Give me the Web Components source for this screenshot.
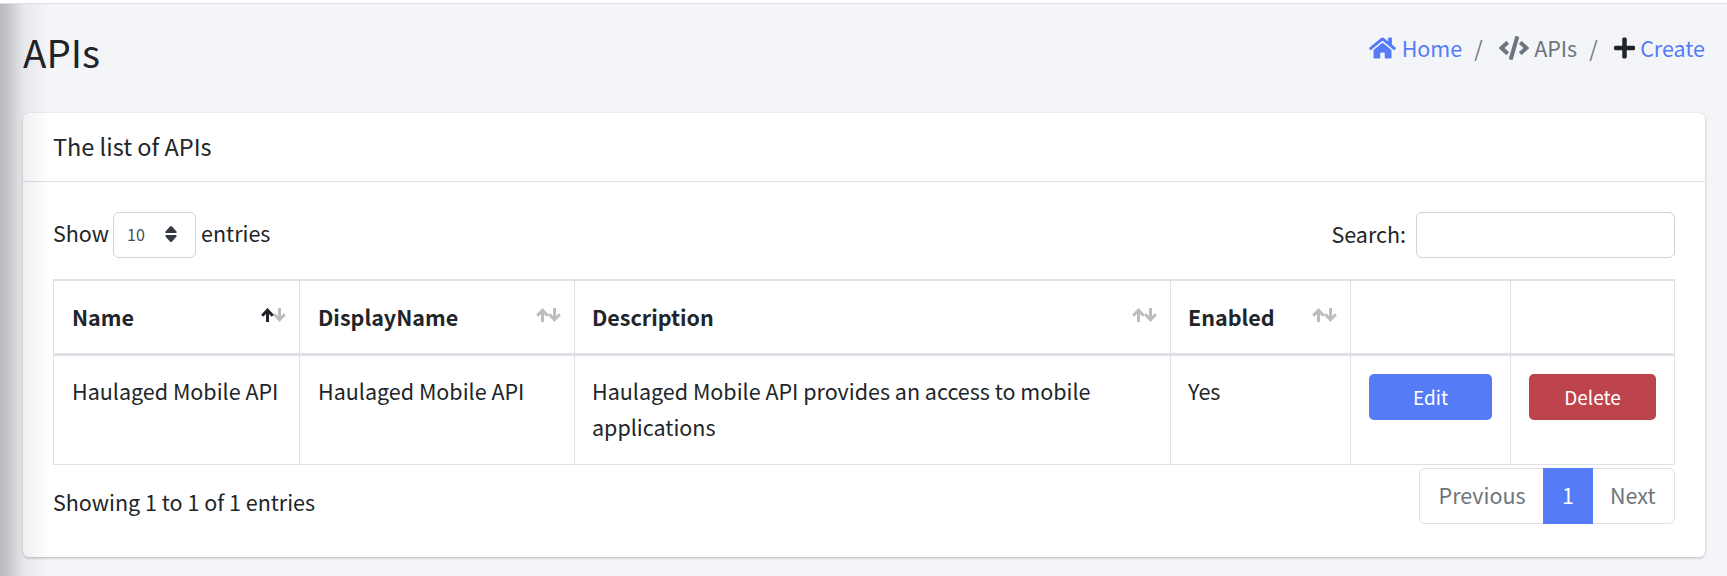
<!DOCTYPE html>
<html><head><meta charset="utf-8">
<style>
html,body{margin:0;padding:0;height:576px;overflow:hidden}
body{background:#f4f5f9;font-family:"Noto Sans CJK JP","Source Sans Pro",sans-serif;color:#212529;font-size:21.5px;line-height:36px}
</style></head><body>
<template id="t-page"><style>
:host{display:block;height:576px;position:relative;box-sizing:border-box;border-top:3px solid #fff}
.line{height:1px;background:#dee2e6}
.shade{position:absolute;left:0;top:1px;bottom:0;width:50px;background:linear-gradient(90deg,rgba(0,0,0,.24),rgba(0,0,0,.2) 14%,rgba(0,0,0,.06) 46%,rgba(0,0,0,0));pointer-events:none}
.main{padding:0 22px 0 23px}
</style><div class="line"></div><div class="main"><slot></slot></div><div class="shade"></div></template>

<template id="t-head"><style>
:host{display:flex;justify-content:space-between;align-items:center;height:109px;box-sizing:border-box;padding-bottom:16px}
h1{margin:0;font-size:38.5px;font-weight:400;line-height:48px}
.crumbs{display:flex;align-items:center;margin-bottom:5.5px}
</style><h1><slot name="title"></slot></h1><div class="crumbs"><slot></slot></div></template>

<template id="t-crumb"><style>
:host{display:inline-flex;align-items:center;gap:5.5px;color:#6c757d;white-space:nowrap}
:host([link]) .t{color:#557cf6}
:host([sep])::before{content:"/";color:#6c757d;margin:0 10.5px 0 12px}
</style><slot name="icon"></slot><span class="t"><slot></slot></span></template>

<template id="t-card"><style>
:host{display:block;background:#fff;border-radius:6px;box-shadow:0 1px 3px rgba(0,0,0,.25);height:444px;position:relative}
header{height:69px;box-sizing:border-box;border-bottom:1px solid #dee2e6;padding:14px 30px;line-height:38px;font-size:23.5px}
.body{padding:30px 30px 0 30px}
</style><header><slot name="title"></slot></header><div class="body"><slot></slot></div></template>

<template id="t-toolbar"><style>
:host{display:flex;justify-content:space-between;align-items:flex-start;height:67px}
.l,.r{display:flex;align-items:center;height:46px}
.l{gap:4px}.r{gap:10px}
.sel{width:83px;height:46px;box-sizing:border-box;border:1px solid #ced4da;border-radius:6px;display:flex;align-items:center;justify-content:space-between;padding:0 18px 2px 13px;font-size:16px;color:#495057}
.box{width:259px;height:46px;box-sizing:border-box;border:1px solid #ced4da;border-radius:6px}
svg{display:block;width:12px;height:16px;fill:#343a40}
.l>span{position:relative;top:-2px}
.l>span:last-child{margin-left:1px}
.r>span{position:relative;top:-1px}
</style><div class="l"><span>Show</span><div class="sel"><span>10</span><svg viewBox="0 0 12 16"><path d="M6 0q.6 0 1 .5l4.500 5q.7 1-.6 1.500H1.100q-1.300-.5-.6-1.500l4.500-5Q5.400 0 6 0zM6 16q-.6 0-1-.5l-4.500-5q-.7-1 .6-1.500h9.800q1.300.5.6 1.500l-4.500 5q-.4.500-1 .5z"/></svg></div><span>entries</span></div><div class="r"><span>Search:</span><div class="box"></div></div></template>

<template id="t-table"><style>
:host{display:block}
table{border-collapse:collapse;table-layout:fixed;width:1621px}
th,td{border:1px solid #dee2e6;padding:0 18px;text-align:left;vertical-align:top}
tr:first-child th{border-top-width:2px}
th{height:72px;font-weight:700;border-bottom:3px solid #dee2e6;vertical-align:middle;position:relative;padding-bottom:0;box-sizing:content-box}
th:nth-child(3),td:nth-child(3),th:nth-child(4),td:nth-child(4){padding-left:17px}
td{height:110px;padding-top:17px;padding-bottom:0;box-sizing:border-box}
.a{position:absolute;right:13px;top:27px;width:25px;height:14px;display:flex}
.a svg{flex:none;width:13px;height:14px;stroke:#bdbdbd;stroke-width:3;fill:none}
.a svg+svg{margin-left:-1px}
.a svg.on{stroke:#212529;position:relative;z-index:1}
.btn{display:flex;align-items:center;justify-content:center;height:46px;color:#fff;border-radius:5px;font-size:19px;line-height:24px;margin-top:1px}
.e{background:#557cf6;width:123px}.d{background:#bd444c;width:127px}
td.b{padding-left:18px;padding-right:0}
</style><table><colgroup><col style="width:246px"><col style="width:275px"><col style="width:596px"><col style="width:180px"><col style="width:160px"><col style="width:164px"></colgroup>
<thead><tr><th>Name<span class="a"><svg viewBox="0 0 13 14" class="on"><path d="M6.500 14V2.500M1.200 7.800 6.500 2.200l5.300 5.600"/></svg><svg viewBox="0 0 13 14"><path d="M6.500 0v11.500M1.200 6.200 6.500 11.800l5.300-5.600"/></svg></span></th>
<th>DisplayName<span class="a"><svg viewBox="0 0 13 14"><path d="M6.500 14V2.500M1.200 7.800 6.500 2.200l5.300 5.600"/></svg><svg viewBox="0 0 13 14"><path d="M6.500 0v11.500M1.200 6.200 6.500 11.800l5.300-5.600"/></svg></span></th>
<th>Description<span class="a"><svg viewBox="0 0 13 14"><path d="M6.500 14V2.500M1.200 7.800 6.500 2.200l5.300 5.600"/></svg><svg viewBox="0 0 13 14"><path d="M6.500 0v11.500M1.200 6.200 6.500 11.800l5.300-5.600"/></svg></span></th>
<th>Enabled<span class="a"><svg viewBox="0 0 13 14"><path d="M6.500 14V2.500M1.200 7.800 6.500 2.200l5.300 5.600"/></svg><svg viewBox="0 0 13 14"><path d="M6.500 0v11.500M1.200 6.200 6.500 11.800l5.300-5.600"/></svg></span></th><th></th><th></th></tr></thead>
<tbody><tr><td>Haulaged Mobile API</td><td>Haulaged Mobile API</td><td>Haulaged Mobile API provides an access to mobile applications</td><td>Yes</td><td class="b"><div class="btn e">Edit</div></td><td class="b"><div class="btn d">Delete</div></td></tr></tbody></table></template>

<template id="t-foot"><style>
:host{display:flex;justify-content:space-between;align-items:flex-start;padding-top:3px}
.i{padding-top:16px}
.p{display:flex;height:56px;box-sizing:border-box;border:1px solid #dee2e6;border-radius:6px;color:#6c757d;line-height:52px;background:#fff}
.p span{padding:0 17px 0 19px}
.p .on{background:#557cf6;color:#fff;margin:-1px 0;line-height:54px;padding:0 19.500px}
.p span:last-child{padding:0 18.500px 0 16.500px}
</style><div class="i">Showing 1 to 1 of 1 entries</div><div class="p"><span>Previous</span><span class="on">1</span><span>Next</span></div></template>

<api-page>
<page-head>
<span slot="title">APIs</span>
<bread-crumb link><svg slot="icon" viewBox="0 0 576 512" style="height:24px;width:27px;display:block;fill:#557cf6"><path d="M280.37 148.26L96 300.11V464a16 16 0 0 0 16 16l112.06-.29a16 16 0 0 0 15.92-16V368a16 16 0 0 1 16-16h64a16 16 0 0 1 16 16v95.64a16 16 0 0 0 16 16.05L464 480a16 16 0 0 0 16-16V300L295.67 148.26a12.19 12.19 0 0 0-15.3 0zM571.6 251.47L488 182.56V44.05a12 12 0 0 0-12-12h-56a12 12 0 0 0-12 12v72.61L318.47 43a48 48 0 0 0-61 0L4.34 251.47a12 12 0 0 0-1.6 16.9l25.5 31A12 12 0 0 0 45.15 301l235.22-193.74a12.19 12.19 0 0 1 15.3 0L530.9 301a12 12 0 0 0 16.9-1.6l25.5-31a12 12 0 0 0-1.7-16.93z"/></svg>Home</bread-crumb>
<bread-crumb sep><svg slot="icon" viewBox="0 0 640 512" style="height:24px;width:30px;display:block;fill:#6c757d"><path d="M278.9 511.5l-61-17.7c-6.4-1.8-10-8.5-8.2-14.9L346.2 8.7c1.8-6.4 8.5-10.1 14.9-8.2l61 17.7c6.4 1.8 10 8.5 8.2 14.9L293.8 503.3c-1.9 6.4-8.5 10.1-14.9 8.2zm-114-112.2l43.5-46.4c4.6-4.9 4.3-12.7-.8-17.2L117 256l90.6-79.7c5.1-4.5 5.5-12.3.8-17.2l-43.5-46.4c-4.5-4.8-12.1-5.1-17-.5L3.8 247.2c-5.1 4.7-5.1 12.8 0 17.5l144.1 135.1c4.9 4.6 12.5 4.4 17-.5zm327.2.6l144.1-135.1c5.1-4.7 5.1-12.8 0-17.5L492.1 112.1c-4.8-4.5-12.4-4.3-17 .5L431.6 159c-4.6 4.9-4.3 12.7.8 17.2L523 256l-90.6 79.7c-5.1 4.5-5.5 12.3-.8 17.2l43.5 46.4c4.5 4.9 12.1 5.1 17 .6z"/></svg>APIs</bread-crumb>
<bread-crumb link sep><svg slot="icon" viewBox="0 0 448 512" style="height:24px;width:21px;display:block;fill:#212529"><path d="M416 208H272V64c0-17.67-14.33-32-32-32h-32c-17.67 0-32 14.33-32 32v144H32c-17.67 0-32 14.33-32 32v32c0 17.67 14.33 32 32 32h144v144c0 17.67 14.33 32 32 32h32c17.67 0 32-14.33 32-32V304h144c17.67 0 32-14.33 32-32v-32c0-17.67-14.33-32-32-32z"/></svg>Create</bread-crumb>
</page-head>
<list-card><span slot="title">The list of APIs</span>
<dt-toolbar></dt-toolbar><api-table></api-table><dt-foot></dt-foot></list-card>
</api-page>
<script>
const def=(n,t)=>customElements.define(n,class extends HTMLElement{constructor(){super();this.attachShadow({mode:"open"}).appendChild(document.getElementById(t).content.cloneNode(true))}});
def("api-page","t-page");def("page-head","t-head");def("bread-crumb","t-crumb");def("list-card","t-card");def("dt-toolbar","t-toolbar");def("api-table","t-table");def("dt-foot","t-foot");
</script>
</body></html>
